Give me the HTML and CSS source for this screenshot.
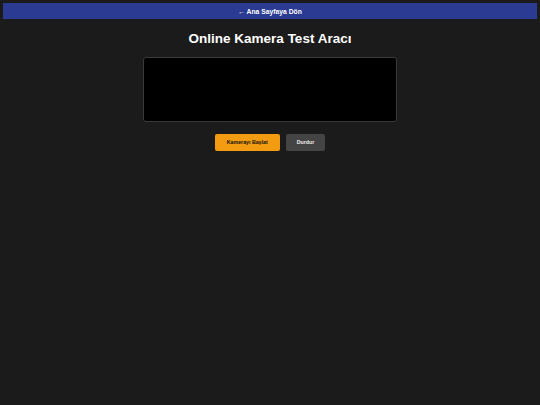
FILE: index.html
```html
<!DOCTYPE html>
<html lang="tr">
<head>
    <meta charset="utf-8">
    <meta name="viewport" content="width=device-width, initial-scale=1.0">
    <title>Online Kamera Test Aracı</title>
    <link rel="stylesheet" href="styles.css">
</head>

<body>
    <nav class="ust-bar">
        <a href="index.html" class="geri-link">&larr; Ana Sayfaya Dön</a>
    </nav>

    <main class="icerik">
        <h1 class="baslik">Online Kamera Test Aracı</h1>

        <video id="kamera" class="kamera" autoplay playsinline></video>

        <div class="kontroller">
            <button id="baslat" class="btn btn-baslat">Kamerayı Başlat</button>
            <button id="durdur" class="btn btn-durdur">Durdur</button>
        </div>
    </main>

    <script>
        let akis = null,
            video = document.querySelector("#kamera");

        //KAMERAYI AÇ
        document.querySelector("#baslat").addEventListener("click", async () => {
            try {
                akis = await navigator.mediaDevices.getUserMedia({ video: true });
                video.srcObject = akis;
            } catch (hata) {
                console.log(hata);
            }
        });

        //KAMERAYI KAPAT
        document.querySelector("#durdur").addEventListener("click", () => {
            if (akis) {
                akis.getTracks().forEach(iz => iz.stop());
                video.srcObject = null;
                akis = null;
            }
        });
    </script>
</body>
</html>
```

FILE: styles.css
```css
body {
    margin: 3px;
    background-color: #1b1b1b;
    color: #fff;
    font-family: "Liberation Sans", Arial, sans-serif;
}

.ust-bar {
    background-color: #2b3a92;
    height: 16px;
    display: flex;
    align-items: center;
    justify-content: center;
}

.geri-link {
    color: #fff;
    font-size: 6.75px;
    font-weight: bold;
    text-decoration: none;
}

.icerik {
    display: flex;
    flex-direction: column;
    align-items: center;
}

.baslik {
    font-size: 13.5px;
    margin: 12px 0 10px;
    line-height: 15.5px;
}

.kamera {
    display: block;
    width: 254px;
    height: 65px;
    box-sizing: border-box;
    background-color: #000;
    border: 1px solid #3a3a3a;
    border-radius: 3px;
}

.kontroller {
    display: flex;
    gap: 6px;
    margin-top: 12px;
}

.btn {
    height: 17px;
    padding: 0 12px;
    border: none;
    border-radius: 2px;
    font-family: "Liberation Sans", Arial, sans-serif;
    font-size: 5.25px;
    font-weight: bold;
    cursor: pointer;
}

.btn-baslat {
    background-color: #f39c12;
    color: #111;
}

.btn-durdur {
    background-color: #444;
    color: #eee;
    padding: 0 11px;
}
```
